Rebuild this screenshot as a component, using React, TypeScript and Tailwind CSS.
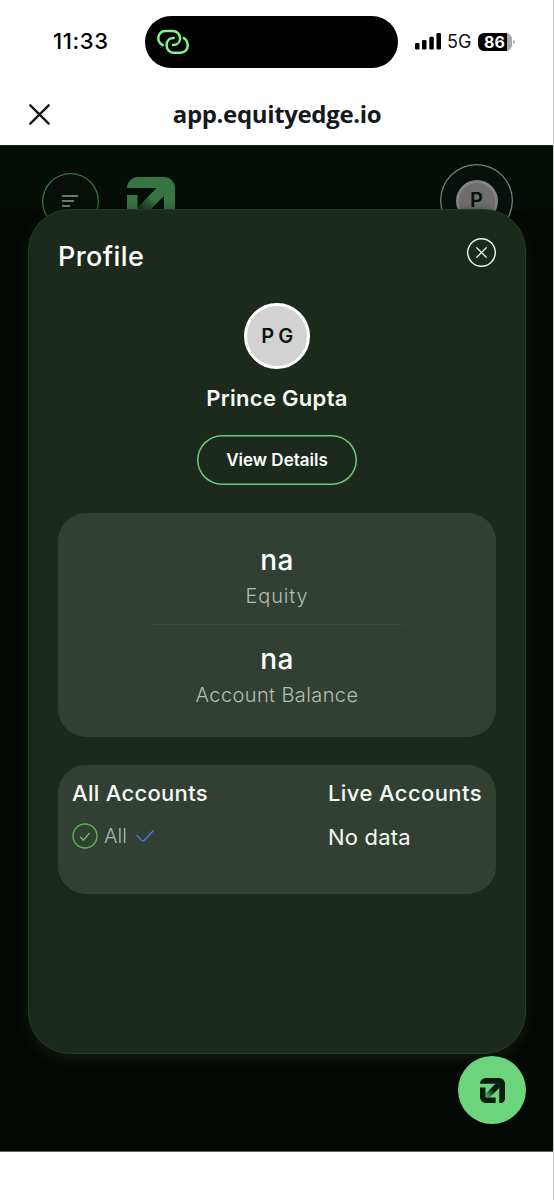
import { X } from 'lucide-react';

const LogoMark = ({ className, gradientId }: { className: string; gradientId: string }) => (
  <svg viewBox="0 0 48 48" className={className}>
    <defs>
      <linearGradient id={gradientId} x1="36" y1="12" x2="11" y2="37" gradientUnits="userSpaceOnUse">
        <stop offset="0.4" stopColor="currentColor" />
        <stop offset="1" stopColor="currentColor" stopOpacity="0.15" />
      </linearGradient>
    </defs>
    <path d="M0 11A11 11 0 0 1 11 0H37A11 11 0 0 1 48 11V39Q48 48 39 48H37V11Z" fill="currentColor" />
    <path d="M0 18H10.5V37.5H30V48H11A11 11 0 0 1 0 37Z" fill="currentColor" />
    <path d="M30 10.5H38V18L18 38H10.5V30.5Z" fill={`url(#${gradientId})`} />
  </svg>
);

const StatusBar = () => (
  <div className="flex h-[83px] items-center pl-[53px]">
    <span className="w-[92px] shrink-0 text-[22px] font-medium tracking-[0.6px] text-black">11:33</span>
    <div className="flex h-[52px] w-[253px] shrink-0 items-center rounded-full bg-black pl-3">
      <svg viewBox="0 0 32 26" className="h-[26px] w-8" fill="none" stroke="#80f584" strokeWidth="2.5" strokeLinecap="round">
        <path d="M5.7 16.2C1.5 14 .3 9.5 2.2 5.8C3.5 3.2 5.7 2 8.5 2H15.5C20 2 23.1 5.1 23.1 9.2C23.1 13.3 20 16 16 16" />
        <path d="M16.8 9C12.5 9 9.6 12 9.6 16C9.6 20.4 12.8 23.8 17 23.8H23.5C27.7 23.8 30.7 20.6 30.7 16.7C30.7 13.3 29 10.5 26.8 9" />
      </svg>
    </div>
    <svg viewBox="0 0 26 17" className="ml-[17px] h-[17px] w-[26px] shrink-0" fill="black">
      <rect x="0" y="10" width="4.5" height="6.5" rx="1.2" />
      <rect x="7" y="7" width="4.5" height="9.5" rx="1.2" />
      <rect x="14.3" y="3.7" width="4.5" height="12.8" rx="1.2" />
      <rect x="21.5" y="0" width="4.5" height="16.5" rx="1.2" />
    </svg>
    <span className="ml-1.5 w-[25px] shrink-0 text-[18px] tracking-[0.1px] text-[#111111]">5G</span>
    <div className="ml-1.5 flex h-[18px] w-[34px] shrink-0 items-center justify-center rounded-[6px] bg-linear-to-r from-black from-[86%] to-[#a8a8a8] to-[86%] pr-px text-[16px] font-bold leading-none text-white">
      86
    </div>
    <span className="ml-px h-1 w-0.5 shrink-0 rounded-r bg-[#b0b0b0]" />
  </div>
);

const AddressBar = () => (
  <div className="flex h-[62px] items-center pl-[26px]">
    <svg viewBox="0 0 26 26" className="h-[26px] w-[26px]" stroke="#14181d" strokeWidth="2.4" strokeLinecap="round">
      <path d="M4.3 4.3L22.7 22.7M22.7 4.3L4.3 22.7" />
    </svg>
    <h1 className="ml-[72px] w-[306px] text-center font-['Open_Sans',sans-serif] text-[24px] font-bold leading-8 tracking-[-0.35px] text-[#15191e]">
      app.equityedge.io
    </h1>
  </div>
);

const AppHeader = () => (
  <div className="flex h-16 items-start justify-between overflow-visible bg-[#050d07] pl-[42px] pr-[41px] shadow-[inset_0_1px_0_#15231a]">
    <div className="flex items-start">
      <div className="mt-7 flex h-[57px] w-[57px] flex-col justify-center gap-[3px] rounded-full bg-[#080f0a] pb-0.5 pl-5 shadow-[inset_0_0_0_1.3px_#38713e]">
        <span className="h-0.5 w-4 bg-[#707771]" />
        <span className="h-0.5 w-3 bg-[#707771]" />
        <span className="h-0.5 w-2 bg-[#707771]" />
      </div>
      <LogoMark gradientId="headerLogo" className="ml-7 mt-8 h-12 w-12 text-[#367441]" />
    </div>
    <div className="mt-[19px] flex h-[73px] w-[73px] items-center justify-center rounded-full bg-[#07100a] shadow-[inset_0_0_0_1.3px_#7b7e7b]">
      <span className="flex h-[42px] w-[42px] items-center justify-center rounded-full border-[3px] border-[#838383] bg-[#6e6e6e] pb-0.5 text-[20px] font-semibold text-[#060f08]">
        P
      </span>
    </div>
  </div>
);

const balances = [
  { label: 'Equity', value: 'na', labelClass: 'tracking-[0.85px]' },
  { label: 'Account Balance', value: 'na', labelClass: 'tracking-[0.4px]' },
];

const BalanceCard = () => (
  <div className="mt-7 flex h-[224px] flex-col items-center rounded-[28px] bg-[#324034] pt-[29px]">
    {balances.map((item, index) => (
      <div key={item.label} className="flex flex-col items-center">
        {index > 0 && <div className="mb-[16px] mt-[10px] h-px w-[254px] bg-[#39473c]" />}
        <span className="text-[28px] font-medium leading-9 tracking-[0.3px] text-white">{item.value}</span>
        <span className={`text-[20px] font-light leading-9 text-[#b5bdb5] ${item.labelClass}`}>{item.label}</span>
      </div>
    ))}
  </div>
);

const AccountsCard = () => (
  <div className="mt-7 flex h-[129px] justify-between rounded-[28px] bg-[#324034] px-3.5 pt-3">
    <div>
      <h3 className="whitespace-nowrap text-[22px] font-medium leading-8 tracking-[0.3px] text-[#f5f9f5]">All Accounts</h3>
      <div className="mt-[14px] flex items-center">
        <svg viewBox="0 0 26 26" className="h-[26px] w-[26px]" fill="none" strokeLinecap="round" strokeLinejoin="round">
          <circle cx="13" cy="13" r="12" stroke="#61b456" strokeWidth="1.4" />
          <path d="M8.5 14.3L11.4 17.2L17.2 10.3" stroke="#6cc85f" strokeWidth="1.3" />
        </svg>
        <span className="ml-1.5 w-[24px] text-[20px] font-light leading-[26px] text-[#aeb8af]">All</span>
        <svg viewBox="0 0 18 12" className="ml-2 h-3 w-[18px]" fill="none" stroke="#4776cd" strokeWidth="1.5" strokeLinecap="round" strokeLinejoin="round">
          <path d="M1 5.5L5.6 10.3Q7 11.5 8.4 10.3L17 1" />
        </svg>
      </div>
    </div>
    <div className="w-[154px]">
      <h3 className="whitespace-nowrap text-[22px] font-medium leading-8 tracking-[0.4px] text-[#f5f9f5]">Live Accounts</h3>
      <p className="mt-3 text-[22px] leading-8 tracking-[0.2px] text-[#f5f9f5]">No data</p>
    </div>
  </div>
);

const ProfileModal = () => (
  <div className="absolute left-7 top-16 h-[845px] w-[498px] rounded-[42px] border border-[#263a29] bg-[#1c2a1d] px-[29px] shadow-[0_5px_12px_#141710]">
    <div className="flex h-[93px] items-start justify-between">
      <h2 className="mt-[29px] text-[27px] font-medium leading-9 tracking-[0.4px] text-white">Profile</h2>
      <button className="mt-[28px] flex h-[29px] w-[29px] items-center justify-center rounded-full shadow-[inset_0_0_0_1.4px_#e9f3e7]">
        <X className="h-[19px] w-[19px] text-[#f4f8f2]" strokeWidth={1.6} />
      </button>
    </div>
    <div className="flex flex-col items-center">
      <div className="flex h-[66px] w-[66px] items-center justify-center rounded-full border-[3px] border-white bg-[#d3d2d3] text-[20px] font-semibold tracking-[-0.4px] text-[#0b180f]">
        P G
      </div>
      <p className="mt-3 text-[22px] font-semibold leading-[34px] tracking-[0.3px] text-[#f6faf5]">Prince Gupta</p>
      <button className="mt-5 h-[50px] w-[160px] rounded-full pt-0.5 text-[17px] font-semibold text-white shadow-[inset_0_0_0_1.5px_#69cd74]">
        View Details
      </button>
    </div>
    <BalanceCard />
    <AccountsCard />
  </div>
);

export default function App() {
  return (
    <div className="h-[1200px] w-[554px] overflow-hidden border-r border-[#c8c8c8] bg-white font-[Inter,sans-serif]">
      <StatusBar />
      <AddressBar />
      <main className="relative -mr-px h-[1007px] border-b border-[#626562] bg-[#040905]">
        <AppHeader />
        <ProfileModal />
        <button className="absolute bottom-[27px] right-7 flex h-[68px] w-[68px] items-center justify-center rounded-full bg-[#6cd47a]">
          <LogoMark gradientId="fabLogo" className="h-[25px] w-[25px] text-[#0a1c10]" />
        </button>
      </main>
    </div>
  );
}
